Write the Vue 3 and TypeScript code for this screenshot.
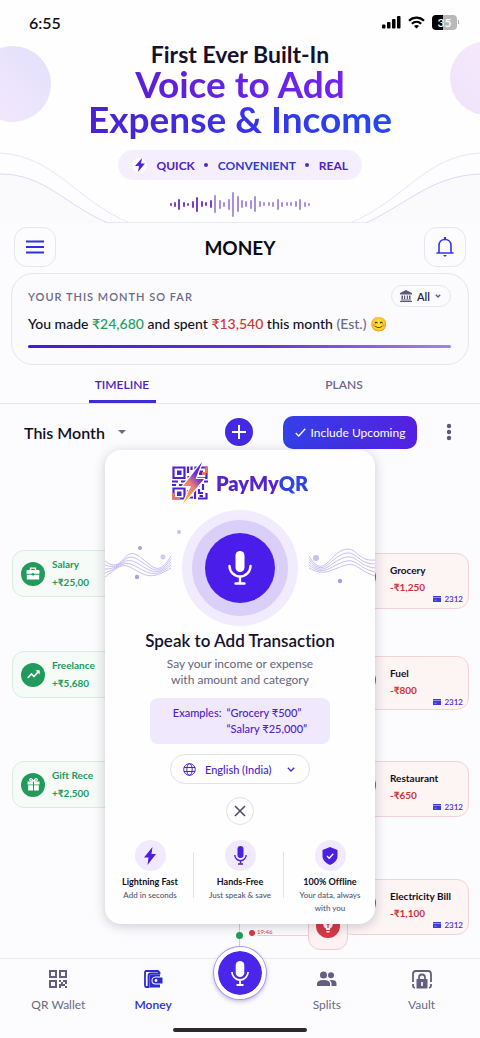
<script setup lang="ts">
import { ref } from 'vue'

interface Income { title: string; amount: string; icon: 'case' | 'trend' | 'gift' }
interface Expense { title: string; amount: string; card: string }
interface Feature { title: string; text: string; icon: 'bolt' | 'mic' | 'shield' }

const incomes: Income[] = [
  { title: 'Salary', amount: '+₹25,00', icon: 'case' },
  { title: 'Freelance', amount: '+₹5,680', icon: 'trend' },
  { title: 'Gift Rece', amount: '+₹2,500', icon: 'gift' },
]

const expenses: Expense[] = [
  { title: 'Grocery', amount: '-₹1,250', card: '2312' },
  { title: 'Fuel', amount: '-₹800', card: '2312' },
  { title: 'Restaurant', amount: '-₹650', card: '2312' },
  { title: 'Electricity Bill', amount: '-₹1,100', card: '2312' },
]

const features: Feature[] = [
  { title: 'Lightning Fast', text: 'Add in seconds', icon: 'bolt' },
  { title: 'Hands-Free', text: 'Just speak & save', icon: 'mic' },
  { title: '100% Offline', text: 'Your data, always with you', icon: 'shield' },
]

const bars = [3, 5, 11, 5, 3, 7, 15, 6, 4, 8, 18, 9, 5, 11, 25, 16, 8, 6, 9, 16, 6, 4, 4, 5, 11, 5, 4, 4, 6, 11, 5, 3]
const waveShifts = [0, 1, 2, 3, 4]
const tab = ref<'timeline' | 'plans'>('timeline')
const account = ref('All')
const period = ref('This Month')
const language = ref('English (India)')
</script>

<template>
  <div class="page">
    <header class="hero">
      <svg class="hero-art" viewBox="0 0 480 223" preserveAspectRatio="none" aria-hidden="true">
        <defs>
          <linearGradient id="orbA" x1="1" y1="0" x2="0" y2="1">
            <stop offset="0" stop-color="#e2e0fc" /><stop offset="1" stop-color="#f5e9fc" />
          </linearGradient>
          <linearGradient id="orbB" x1="1" y1="0" x2="0" y2="1">
            <stop offset="0" stop-color="#faeafb" /><stop offset="1" stop-color="#ede3fb" />
          </linearGradient>
        </defs>
        <circle cx="13" cy="84" r="38" fill="url(#orbA)" />
        <circle cx="487" cy="78" r="37" fill="url(#orbB)" />
        <path d="M0 153C55 156 75 200 130 223H0ZM480 153C425 156 405 200 350 223H480Z" fill="#fdfcfe" />
        <path d="M0 174C45 174 65 205 108 223H0ZM480 174C432 176 410 202 366 223H480Z" fill="#fafafd" />
        <path d="M0 153C55 156 75 200 130 223M480 153C425 156 405 200 350 223" stroke="#eae4f9" />
        <path d="M0 174C45 174 65 205 108 223M480 174C432 176 410 202 366 223" stroke="#dfd8f8" />
        <path d="M108 222.500H366" stroke="#ebe8f3" />
      </svg>
      <div class="status">
        <span class="clock">6:55</span>
        <span class="signals">
          <svg width="19" height="13" viewBox="0 0 19 13" aria-hidden="true">
            <rect x="0" y="8.500" width="3.500" height="4" rx="1" /><rect x="5" y="6" width="3.500" height="6.500" rx="1" />
            <rect x="10" y="3" width="3.500" height="9.500" rx="1" /><rect x="15" y="0" width="3.500" height="12.500" rx="1" />
          </svg>
          <svg width="17" height="13" viewBox="0 0 17 13" fill="none" stroke="#000" stroke-width="2.200" aria-hidden="true">
            <path d="M1 4.700C5.300.500 11.700.500 16 4.700" /><path d="M3.800 7.700C6.600 5.100 10.400 5.100 13.200 7.700" />
            <path d="M8.500 12.500L6 10C7.400 8.700 9.600 8.700 11 10Z" fill="#000" stroke="none" />
          </svg>
          <span class="battery"><span class="cell">35</span><i></i></span>
        </span>
      </div>
      <h1 class="headline">
        <span class="lead">First Ever Built-In</span>
        <span class="grad one">Voice to Add</span>
        <span class="grad two">Expense &amp; Income</span>
      </h1>
      <p class="pill">
        <span class="spark">
          <svg width="10" height="14" viewBox="0 0 10 14" aria-hidden="true"><path d="M7 0L0 8H4L3 14L10 5.500H6Z" fill="#5425d8" /></svg>
        </span>
        <span>QUICK</span><b></b><span class="blue">CONVENIENT</span><b></b><span>REAL</span>
      </p>
      <div class="bars" aria-hidden="true">
        <i v-for="(h, n) in bars" :key="n" :style="{ height: h + 'px' }"></i>
      </div>
    </header>

    <div class="titlebar">
      <button class="square" type="button" aria-label="Menu">
        <svg width="18" height="14" viewBox="0 0 18 14" fill="none" stroke="#3030d8" stroke-width="2"><path d="M0 1.500H18M0 7H18M0 12.500H18" /></svg>
      </button>
      <h2>MONEY</h2>
      <button class="square" type="button" aria-label="Notifications">
        <svg width="18" height="20" viewBox="0 0 18 20" fill="none" stroke="#3535e2" stroke-width="1.600">
          <path d="M1 16H17M3 16V8.500C3 5 5.500 2.500 9 2.500S15 5 15 8.500V16" stroke-linecap="round" /><path d="M9 0V2.500" stroke-width="2.200" /><path d="M7 18H11L9 20Z" fill="#3535e2" stroke="none" />
        </svg>
      </button>
    </div>

    <section class="summary">
      <div class="summary-top">
        <h3>YOUR THIS MONTH SO FAR</h3>
        <div class="drop account">
          <svg width="12" height="12" viewBox="0 0 12 12" fill="#5d5a7d" aria-hidden="true"><path d="M6 0L12 3V4.500H0V3ZM1.500 5.500H3V9H1.500ZM4 5.500H5.200V9H4ZM6.800 5.500H8V9H6.800ZM9 5.500H10.500V9H9ZM.800 9.500H11.200V10.500H.800ZM0 11H12V12H0Z" /></svg>
          <select v-model="account" aria-label="Account"><option>All</option></select>
          <svg width="6" height="4" viewBox="0 0 6 4" aria-hidden="true"><path d="M.800.700L3 3L5.200.700" fill="none" stroke="#5d5a7d" stroke-width="1.300" /></svg>
        </div>
      </div>
      <p class="totals">You made <em class="in">₹24,680</em> and spent <em class="out">₹13,540</em> this month <span>(Est.)</span> <span class="smile">😊</span></p>
      <div class="meter"></div>
    </section>

    <div class="tabs" role="tablist">
      <button type="button" role="tab" :aria-selected="tab === 'timeline'" :class="{ on: tab === 'timeline' }" @click="tab = 'timeline'">TIMELINE</button>
      <button type="button" role="tab" :aria-selected="tab === 'plans'" :class="{ on: tab === 'plans' }" @click="tab = 'plans'">PLANS</button>
    </div>

    <main class="stage">
      <div class="toolbar">
        <div class="drop period">
          <select v-model="period" aria-label="Period"><option>This Month</option><option>Last Month</option></select>
          <svg width="8" height="4" viewBox="0 0 8 4" aria-hidden="true"><path d="M0 0H8L4 4Z" fill="#6d6990" /></svg>
        </div>
        <button class="plus" type="button" aria-label="Add">
          <svg width="14" height="14" viewBox="0 0 14 14" stroke="#fff" stroke-width="2"><path d="M7 0V14M0 7H14" /></svg>
        </button>
        <button class="upcoming" type="button">
          <svg width="11" height="9" viewBox="0 0 11 9" fill="none" stroke="#fff" stroke-width="1.300" aria-hidden="true"><path d="M.700 5L3.700 8L10.300.700" /></svg>
          Include Upcoming
        </button>
        <button class="more" type="button" aria-label="More options">
          <svg width="6" height="18" viewBox="0 0 6 18" fill="#5d5a78"><circle cx="3" cy="3" r="2.200" /><circle cx="3" cy="9" r="2.200" /><circle cx="3" cy="15" r="2.200" /></svg>
        </button>
      </div>

      <div class="timeline">
        <ul class="incomes">
          <li v-for="item in incomes" :key="item.title">
            <span class="badge">
              <svg v-if="item.icon === 'case'" width="14" height="13" viewBox="0 0 14 13" aria-hidden="true"><path d="M4.500 3V1.200H9.500V3" fill="none" stroke="#fff" stroke-width="1.300" /><path d="M1.500 3H12.500Q13.500 3 13.500 4V6.800H8.500L7 5.800L5.500 6.800H.500V4Q.500 3 1.500 3ZM.800 7.800H5.500L7 8.800L8.500 7.800H13.200V12.500H.800Z" fill="#fff" /></svg>
              <svg v-else-if="item.icon === 'trend'" width="13" height="9" viewBox="0 0 13 9" aria-hidden="true"><path d="M.700 8L4.500 4L7 6.500L11 2" fill="none" stroke="#fff" stroke-width="1.600" /><path d="M8.500.300H12.700V4.500Z" fill="#fff" /></svg>
              <svg v-else width="13" height="13" viewBox="0 0 13 13" aria-hidden="true"><path d="M6 3.200C1 3.500 2.500-.800 5 1.200L6.500 2.800L8 1.200C10.500-.800 12 3.500 7 3.200" fill="none" stroke="#fff" stroke-width="1.200" /><path d="M.500 3.500H6V6.500H.500ZM7 3.500H12.500V6.500H7ZM1.200 7.300H6V12.500H1.200ZM7 7.300H11.800V12.500H7Z" fill="#fff" /></svg>
            </span>
            <span class="lines"><strong>{{ item.title }}</strong><strong class="sum">{{ item.amount }}</strong></span>
          </li>
        </ul>
        <ul class="expenses">
          <li v-for="item in expenses" :key="item.title">
            <span class="dot"></span>
            <span class="lines">
              <strong>{{ item.title }}</strong>
              <strong class="sum">{{ item.amount }}</strong>
              <small>
                <svg width="8" height="6" viewBox="0 0 8 6" aria-hidden="true"><path d="M0 0H8V6H0Z" fill="#3c3ae0" /><path d="M0 1.500H8M1.500 4.200H3.500" stroke="#b9b6f5" stroke-width=".7" /></svg>
                {{ item.card }}
              </small>
            </span>
          </li>
        </ul>
        <div class="marker">
          <span class="spine"></span>
          <span class="node green"></span>
          <span class="node red"></span>
          <time>19:46</time>
          <span class="bulb">
            <span class="badge">
              <svg width="10" height="14" viewBox="0 0 10 14" aria-hidden="true"><path d="M5 0A5 5 0 0 0 3 9.500V11H7V9.500A5 5 0 0 0 5 0ZM3.500 12H6.500V13.500H3.500Z" fill="#fff" /><path d="M5 5V9M3.500 5L5 6L6.500 5" fill="none" stroke="#d93744" /></svg>
            </span>
          </span>
        </div>
      </div>

      <section class="modal" role="dialog" aria-label="Speak to Add Transaction">
        <div class="brand">
          <svg width="36" height="42" viewBox="0 0 36 42" aria-hidden="true">
            <defs>
              <linearGradient id="boltFill" x1=".8" y1="0" x2=".2" y2="1">
                <stop offset="0" stop-color="#3d20dc" /><stop offset=".3" stop-color="#6a32cf" /><stop offset=".55" stop-color="#e2797c" /><stop offset="1" stop-color="#fdb52b" />
              </linearGradient>
            </defs>
            <g fill="none" stroke="#4d23cf" stroke-width="2.200">
              <path d="M1.500 5.500H12.500V16H1.500ZM23.500 5.500H34.500V16H23.500ZM1.500 26.500H12.500V36.500H1.500Z" />
              <path d="M16 4.500V11M19.500 4.500V8M15.500 15H20M0 19.500H6M9 19.500H16M0 23H4M7 23H14M25 19.500H29M32 19.500H36M22 23.500H28M31 22V28M16 28V32M16 35.500H21M23 28V37M27 27V31H31M26 36.500H34.500V31M27.500 34H31" />
            </g>
            <path d="M5 8.500H9.500V13H5ZM27 8.500H31V13H27ZM5 29.500H9.500V34H5Z" fill="#4d23cf" />
            <path d="M0 31H2.600V37.600H0ZM0 35.400H8V37.600H0ZM30 10H33V13H30ZM33.400 4.400H35.600V11H33.400Z" fill="#ed765d" />
            <path d="M30 0L11 24H19L11 42L32 17H23.500Z" fill="url(#boltFill)" stroke="#fff" stroke-width="2.400" stroke-linejoin="round" paint-order="stroke" />
          </svg>
          <span class="name">PayMyQR</span>
        </div>

        <div class="voice">
          <svg class="wave" viewBox="0 0 66 70" aria-hidden="true">
            <g fill="none" stroke="#bbaeee" stroke-width=".8">
              <path v-for="s in waveShifts" :key="s" :d="`M0 ${28 + s * 4}C18 ${42 - s * 3} 18 ${14 + s * 4} 32 ${22 + s * 4}S52 ${47 - s} 66 ${23 + s * 3}`" />
            </g>
            <circle cx="35" cy="15" r="2" fill="#aa9ce8" /><circle cx="32" cy="44" r="2.200" fill="#aa9ce8" /><circle cx="58" cy="24" r="2.500" fill="#d2c8f4" />
          </svg>
          <button class="talk" type="button" aria-label="Speak">
            <svg width="26" height="34" viewBox="0 0 26 34" aria-hidden="true"><rect x="8.500" y="0" width="9" height="21" rx="4.500" fill="#fff" /><path d="M2.500 15A10.500 10.500 0 0 0 23.500 15M13 26V32M8.500 32.500H17.500" fill="none" stroke="#fff" stroke-width="2.400" stroke-linecap="round" /></svg>
          </button>
          <svg class="wave" viewBox="0 0 66 70" aria-hidden="true">
            <g fill="none" stroke="#bbaeee" stroke-width=".8">
              <path v-for="s in waveShifts" :key="s" :d="`M0 ${23 + s * 3}C14 ${47 - s} 20 ${22 + s * 4} 34 ${17 + s * 4}S48 ${29 + s * 2} 66 ${27 + s * 4}`" />
            </g>
            <circle cx="7" cy="25" r="3" fill="#c9bff3" /><circle cx="31" cy="48" r="2.200" fill="#aa9ce8" />
          </svg>
          <span class="speck"></span>
        </div>

        <h2>Speak to Add Transaction</h2>
        <p class="hint">Say your income or expense<br />with amount and category</p>
        <div class="examples">
          <span>Examples:</span>
          <span>“Grocery ₹500”<br />“Salary ₹25,000”</span>
        </div>
        <div class="drop lang">
          <svg width="13" height="13" viewBox="0 0 13 13" fill="none" stroke="#4a25d0" aria-hidden="true"><circle cx="6.500" cy="6.500" r="5.800" /><ellipse cx="6.500" cy="6.500" rx="2.700" ry="5.800" /><path d="M1 4.500H12M1 8.500H12" /></svg>
          <select v-model="language" aria-label="Language"><option>English (India)</option><option>Hindi</option></select>
          <svg class="end" width="8" height="5" viewBox="0 0 8 5" aria-hidden="true"><path d="M.800.800L4 4L7.200.800" fill="none" stroke="#4a25d0" stroke-width="1.300" /></svg>
        </div>
        <button class="close" type="button" aria-label="Close">
          <svg width="12" height="12" viewBox="0 0 12 12" stroke="#4c4968" stroke-width="1.500"><path d="M1 1L11 11M11 1L1 11" /></svg>
        </button>
        <ul class="features">
          <li v-for="f in features" :key="f.title">
            <span class="disc">
              <svg v-if="f.icon === 'bolt'" width="12" height="18" viewBox="0 0 12 18" aria-hidden="true"><path d="M8.500 0L0 10.500H4.500L3.500 18L12 7H7.500Z" fill="#4b1fe0" /></svg>
              <svg v-else-if="f.icon === 'mic'" width="13" height="19" viewBox="0 0 13 19" aria-hidden="true"><rect x="3.500" y="0" width="6" height="12" rx="3" fill="#4b1fe0" /><path d="M.800 9A5.700 5.700 0 0 0 12.200 9M6.500 15V18M4 18H9" fill="none" stroke="#4b1fe0" stroke-width="1.400" /></svg>
              <svg v-else width="16" height="18" viewBox="0 0 16 18" aria-hidden="true"><path d="M8 0L15.500 3V9C15.500 13 12 16.500 8 18C4 16.500.500 13 .500 9V3Z" fill="#4b1fe0" /><path d="M5 9L7.200 11.200L11.300 6.700" fill="none" stroke="#fff" stroke-width="1.400" /></svg>
            </span>
            <strong>{{ f.title }}</strong>
            <span class="text">{{ f.text }}</span>
          </li>
        </ul>
      </section>
    </main>

    <nav class="nav">
      <a href="#wallet">
        <svg width="18" height="18" viewBox="0 0 18 18" aria-hidden="true"><path d="M1 1H7V7H1ZM11 1H17V7H11ZM1 11H7V17H1Z" fill="none" stroke="#625f80" stroke-width="2" /><path d="M10 10H12V12H10ZM12 12H14V14H12ZM14 10H18V12H14ZM16 12H18V14H16ZM10 14H12V18H10ZM12 14H14V16H12ZM14 14H16V16H14ZM16 16H18V18H16Z" fill="#625f80" /></svg>
        QR Wallet
      </a>
      <a href="#money" class="on" aria-current="page">
        <svg width="19" height="18" viewBox="0 0 19 18" aria-hidden="true"><path d="M2 1H14L15.500 2.500V3.500H7Q4.500 3.500 4.500 6V17H2Q1 17 1 15.500V2.500Q1 1 2 1Z" fill="none" stroke="#2d2bd0" stroke-width="1.800" /><path d="M5.500 15V6.500Q5.500 4.500 7.500 4.500H16V6.500H11.500Q7.500 7 7.500 10.700T11.500 14.500H16V17.500H5.500Z" fill="#2d2bd0" /><path d="M11.500 7.500H18.500V13.500H11.500A3 3 0 0 1 11.500 7.500Z" fill="#2d2bd0" /><circle cx="12" cy="10.500" r="1.400" fill="#fff" /></svg>
        Money
      </a>
      <button type="button" class="fab" aria-label="Speak">
        <svg width="18" height="25" viewBox="0 0 18 25" aria-hidden="true"><rect x="4.700" y="0" width="8.600" height="16" rx="4.300" fill="#fff" /><path d="M1 11A8 8 0 0 0 17 11M9 19V24M5.500 24H12.500" fill="none" stroke="#fff" stroke-width="1.800" /></svg>
      </button>
      <a href="#splits">
        <svg width="20" height="18" viewBox="0 0 20 18" fill="#625f80" aria-hidden="true"><circle cx="6.500" cy="5" r="3.500" /><circle cx="14" cy="5.200" r="3" /><path d="M0 16V13.500Q0 10 6.500 10T13 13.500V16ZM12.500 10.200Q19.500 9.500 19.500 13.500V16H14.500V13.500Q14.500 11.500 12.500 10.200Z" /></svg>
        Splits
      </a>
      <a href="#vault">
        <svg width="20" height="20" viewBox="0 0 20 20" aria-hidden="true"><path d="M1 12V4Q1 1 4 1H16Q19 1 19 4V12M1 14V16Q1 17.500 3 18M19 14V16Q19 17.500 17 18" fill="none" stroke="#625f80" stroke-width="1.800" /><path d="M4.500 9H15.500V18.500H4.500Z" fill="#625f80" /><path d="M7 9V7.500A3 3 0 0 1 13 7.500V9" fill="none" stroke="#625f80" stroke-width="1.800" /><path d="M10 12V16" stroke="#fff" stroke-width="1.600" /></svg>
        Vault
      </a>
    </nav>
    <div class="home"></div>
  </div>
</template>

<style>
body { background: #fcfcfe; }
</style>

<style scoped>
.page { font-family: Lato, "Noto Sans", "Liberation Sans", sans-serif; font-variant-ligatures: none; color: #100f24; min-height: 100vh; display: flex; flex-direction: column; overflow: hidden; background: #fcfcfe; }
h1, h2, h3, p, ul { margin: 0; padding: 0; }
ul { list-style: none; }
button, select { font: inherit; color: inherit; border: 0; background: none; padding: 0; margin: 0; cursor: pointer; }
select { appearance: none; }
svg { display: block; flex: none; }
.hero { position: relative; height: 223px; background: #fefefe; }
.hero-art { position: absolute; inset: 0; width: 100%; height: 100%; fill: none; }
.hero > :not(.hero-art) { position: relative; }
.status { display: flex; justify-content: space-between; align-items: center; height: 42px; padding: 2px 21px 0 29px; box-sizing: border-box; }
.clock { font-size: 16px; font-weight: 600; color: #111; }
.signals { display: flex; align-items: center; gap: 7px; }
.battery { display: flex; align-items: center; gap: 1px; }
.cell { width: 25px; height: 15px; border-radius: 4px; background: linear-gradient(90deg, #000 42%, #b9b9b9 42%); color: #fff; font-size: 12px; line-height: 15px; font-weight: 600; text-align: center; }
.battery i { width: 1px; height: 4px; background: #aaa; }
.headline { display: flex; flex-direction: column; align-items: center; font-weight: 700; }
.lead { font-size: 23px; line-height: 24px; color: #14112f; }
.grad { font-size: 37px; line-height: 35px; padding-bottom: 5px; margin-bottom: -5px; color: transparent; background-clip: text; }
.one { background-image: linear-gradient(90deg, #5a1fd8, #7124f2); }
.two { background-image: linear-gradient(90deg, #4b21cf, #3a32e8 50%, #2348f2); }
.pill { display: flex; align-items: center; justify-content: space-between; width: 244px; height: 30px; margin: 14px auto 0; padding: 0 14px; box-sizing: border-box; border-radius: 15px; background: #f5effd; font-size: 12px; font-weight: 700; color: #4f22c4; }
.spark { display: grid; place-items: center; width: 15px; height: 15px; background: #fff; border-radius: 50%; }
.pill b { width: 4px; height: 4px; border-radius: 50%; background: #4a2cc8; }
.blue { color: #2f3ccf; }
.bars { display: flex; align-items: center; justify-content: space-between; width: 141px; height: 26px; margin: 11px auto 0; }
.bars i { width: 2px; border-radius: 1px; background: #a78fe2; }
.bars i:nth-child(-n + 10) { background: #7b3fc4; }
.titlebar { display: flex; align-items: center; justify-content: space-between; padding: 4px 14px 6px; }
.titlebar h2 { font-size: 19px; font-weight: 700; color: #0c0b14; }
.square { display: grid; place-items: center; width: 42px; height: 40px; border: 1px solid #e6e6ee; border-radius: 13px; box-sizing: border-box; }
.summary { margin: 0 11px; padding: 11px 17px 0 16px; height: 92px; box-sizing: border-box; border: 1px solid #e6e6ec; border-radius: 22px; background: #fbfbfd; }
.summary-top { display: flex; justify-content: space-between; align-items: center; }
.summary h3 { font-size: 11px; font-weight: 600; letter-spacing: 1px; color: #6c6985; }
.drop { display: flex; align-items: center; }
.account { height: 22px; padding: 0 9px 0 8px; border: 1px solid #e6e6ee; border-radius: 12px; box-sizing: border-box; font-size: 11px; font-weight: 600; width: 60px; justify-content: space-between; color: #25233c; }
.totals { font-size: 14px; line-height: 20px; font-weight: 500; margin-top: 7px; white-space: nowrap; }
.totals em { font-style: normal; }
.totals span { color: #6c6985; }
.in { color: #1f9d5c; }
.out { color: #cf3339; }
.meter { height: 3px; border-radius: 2px; margin-top: 11px; background: linear-gradient(90deg, #421bd6, #5d36dc 55%, #a085ea); }
.tabs { display: flex; justify-content: space-around; border-bottom: 1px solid #e4e4ec; height: 38px; padding: 0 25px 0 11px; }
.tabs button { width: 67px; font-size: 12px; font-weight: 600; color: #6c6985; border-bottom: 3px solid transparent; border-top: 3px solid transparent; }
.tabs .on { color: #4a25cc; border-bottom-color: #3d2bd6; }
.stage { position: relative; flex: 1; display: flex; flex-direction: column; }
.toolbar { display: flex; align-items: center; height: 54px; padding: 2px 24px 0; box-sizing: border-box; }
.period { width: 102px; justify-content: space-between; font-size: 16px; font-weight: 600; }
.plus { display: grid; place-items: center; width: 28px; height: 28px; border-radius: 50%; margin-left: 99px; background: #4329e0; }
.upcoming { display: flex; align-items: center; justify-content: center; gap: 5px; width: 134px; height: 33px; margin-left: auto; border-radius: 10px; background: linear-gradient(90deg, #3340e8, #5420e2); color: #fff; font-size: 12px; font-weight: 400; }
.more { margin-left: 29px; margin-right: 4px; }
.timeline { position: relative; flex: 1; min-height: 500px; display: flex; justify-content: space-between; padding: 0 11px 0 12px; }
.timeline li { box-sizing: border-box; display: flex; border-radius: 12px; font-size: 10px; }
.timeline strong { font-weight: 700; white-space: nowrap; }
.incomes { padding-top: 92px; width: 150px; color: #219a5c; }
.incomes li { height: 47px; padding-left: 8px; gap: 7px; align-items: center; border: 1px solid #d8ece1; background: #f6fbf8; }
.incomes li + li { margin-top: 54px; }
.incomes li:last-child { margin-top: 63px; }
.incomes .lines { display: flex; flex-direction: column; gap: 3px; }
.incomes .lines strong { line-height: 15px; }
.badge { display: grid; place-items: center; width: 24px; height: 24px; border-radius: 50%; background: #219a5c; flex: none; }
.expenses { padding-top: 95px; width: 129px; }
.expenses li { position: relative; height: 56px; border: 1px solid #f4d3d6; background: #fdf4f4; padding: 8px 5px 0 49px; }
.expenses li + li { margin-top: 47px; }
.expenses li:nth-child(2) { height: 54px; }
.expenses li:nth-child(3) { margin-top: 51px; }
.expenses li:last-child { margin-top: 62px; }
.expenses .lines { display: flex; flex-direction: column; flex: 1; }
.expenses .lines strong { line-height: 16px; }
.expenses .lines .sum { line-height: 18px; color: #cf3339; }
.expenses .dot { position: absolute; left: 11px; top: 11px; width: 24px; height: 24px; border-radius: 50%; background: #d93744; }
.expenses small { display: flex; align-items: center; justify-content: flex-end; gap: 3px; font-size: 8px; line-height: 6px; font-weight: 600; color: #4a2cd2; }
.marker { position: absolute; left: 50%; right: 132px; bottom: 0; height: 40px; }
.spine { position: absolute; left: -1px; top: 0; bottom: 0; border-left: 1px solid #c9cfe0; }
.node { position: absolute; border-radius: 50%; }
.green { left: -4px; top: 14px; width: 7px; height: 7px; background: #219a5c; }
.red { left: 9px; top: 12px; width: 6px; height: 6px; background: #d93744; }
.marker time { position: absolute; left: 17px; top: 10px; width: 52px; font-size: 6px; line-height: 7px; color: #d93744; border-bottom: 1px solid #f2cdd1; }
.bulb { position: absolute; right: 0; bottom: 8px; width: 40px; height: 46px; box-sizing: border-box; display: flex; justify-content: center; padding-top: 9px; border: 1px solid #f2cdd1; border-radius: 12px; background: #fdf1f1; }
.bulb .badge { background: #d93744; }
.modal { position: absolute; top: 46px; left: 50%; width: 270px; margin-left: -135px; min-height: 474px; padding: 12px 0 8px; box-sizing: border-box; display: flex; flex-direction: column; align-items: center; border-radius: 16px; background: #fefefe; box-shadow: 0 2px 12px rgba(30, 25, 60, .22); }
.brand { display: flex; align-items: center; gap: 8px; }
.name { font-size: 20px; font-weight: 800; color: transparent; background: linear-gradient(90deg, #5524cc 65%, #2d43e2 72%); background-clip: text; }
.voice { position: relative; display: flex; align-items: center; justify-content: space-between; align-self: stretch; margin-top: 6px; height: 116px; }
.speck { position: absolute; left: 72px; top: 20px; width: 4px; height: 4px; border-radius: 50%; background: #c9bff3; }
.wave { width: 66px; height: 70px; }
.talk { display: grid; place-items: center; width: 70px; height: 70px; border-radius: 50%; background: #4a1dea; box-shadow: 0 0 0 13px #dacff9, 0 0 0 23px #f1ecfd; }
.modal h2 { font-size: 17px; line-height: 22px; font-weight: 600; margin-top: 4px; color: #14112f; }
.hint { margin-top: 4px; font-size: 12px; line-height: 16px; text-align: center; color: #66637d; }
.examples { display: flex; justify-content: center; gap: 5px; width: 180px; height: 46px; margin-top: 10px; padding-top: 7px; box-sizing: border-box; border-radius: 8px; background: #f0e8fd; font-size: 11px; line-height: 16px; font-weight: 500; color: #4a25c4; }
.lang { gap: 9px; width: 140px; height: 30px; margin-top: 10px; padding: 0 14px 0 12px; box-sizing: border-box; border: 1px solid #e2dfee; border-radius: 15px; font-size: 11px; font-weight: 500; color: #4a25c4; }
.end { margin-left: auto; }
.close { display: grid; place-items: center; width: 28px; height: 28px; margin-top: 13px; border: 1px solid #e2e0ea; border-radius: 50%; box-sizing: border-box; }
.features { display: grid; grid-template-columns: 1fr 1fr 1fr; align-self: stretch; margin-top: 15px; }
.features li { position: relative; display: flex; flex-direction: column; align-items: center; text-align: center; }
.features li + li::before { content: ""; position: absolute; left: -2px; top: 12px; height: 46px; border-left: 1px solid #e4e1ec; }
.disc { display: grid; place-items: center; width: 31px; height: 31px; border-radius: 50%; background: #f1eafe; }
.features strong { margin-top: 4px; font-size: 9px; line-height: 14px; font-weight: 700; }
.text { width: 72px; font-size: 8px; line-height: 13px; font-weight: 500; color: #56536c; }
.nav { position: relative; display: grid; grid-template-columns: 6fr 6fr 5fr 6fr 6fr; justify-items: center; height: 70px; padding: 0 11px; box-sizing: border-box; border-top: 1px solid #e8e8ee; background: #fcfcfe; }
.nav a { display: flex; flex-direction: column; align-items: center; justify-content: space-between; height: 42px; margin-top: 11px; font-size: 12px; font-weight: 400; color: #6c6985; text-decoration: none; }
.nav .on { color: #2d2bd0; font-weight: 600; }
.fab { display: grid; place-items: center; width: 52px; height: 52px; margin-top: -12px; border: 4px solid #fff; border-radius: 50%; background: #4a25ea; background-clip: padding-box; box-shadow: 0 0 0 1px #a696ee, 0 2px 5px rgba(60, 40, 150, .4); box-sizing: border-box; }
.home { width: 134px; height: 4px; margin: 0 auto 6px; border-radius: 2px; background: #2b292c; flex: none; }
</style>
